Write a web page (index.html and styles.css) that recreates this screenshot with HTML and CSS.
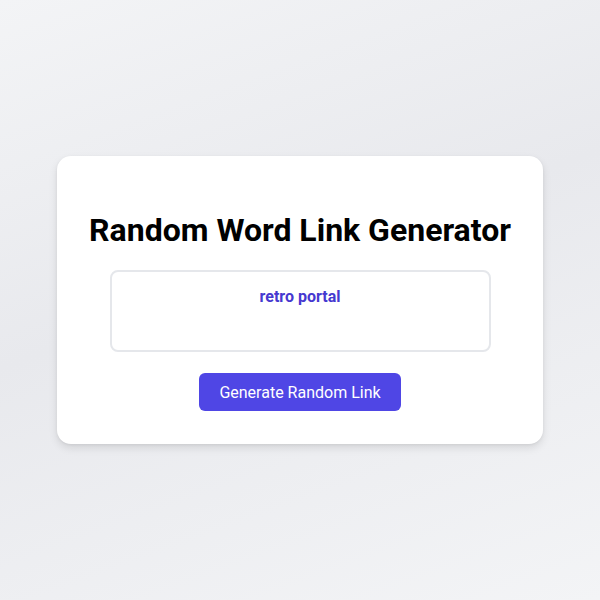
FILE: index.html
```html
<!DOCTYPE html>
<html lang="en">
<head>
<meta charset="utf-8">
<title>Random Word Link Generator</title>
<link rel="stylesheet" href="styles.css">
</head>
<body>
<main class="card">
  <h1 class="title">Random Word Link Generator</h1>
  <div class="output"><a class="link" href="#">retro portal</a></div>
  <button class="btn" type="button">Generate Random Link</button>
</main>
</body>
</html>
```
FILE: styles.css
```css
html, body {
  margin: 0;
  height: 100%;
}
body {
  font-family: Roboto, "Liberation Sans", sans-serif;
  background: linear-gradient(160deg, #f3f4f6 0%, #e8e9ed 45%, #f3f4f6 100%);
  display: flex;
  align-items: center;
  justify-content: center;
}
.card {
  width: 486px;
  box-sizing: border-box;
  background: #ffffff;
  border-radius: 14px;
  box-shadow: 0 4px 8px rgba(0, 0, 0, 0.1), 0 1px 3px rgba(0, 0, 0, 0.06);
  padding: 32px 53px 33px;
  display: flex;
  flex-direction: column;
  align-items: center;
}
.title {
  margin: 23px 0 21px;
  font-size: 32px;
  line-height: 38px;
  font-weight: 700;
  color: #000;
  white-space: nowrap;
}
.output {
  width: 381px;
  height: 82px;
  box-sizing: border-box;
  border: 2px solid #e5e7eb;
  border-radius: 8px;
  padding: 15px 16px 16px;
  text-align: center;
}
.link {
  color: #4639d0;
  font-weight: 700;
  font-size: 16px;
  line-height: 20px;
  text-decoration: none;
}
.btn {
  margin-top: 21px;
  height: 38px;
  padding: 0 20px;
  border: none;
  border-radius: 6px;
  background: #4f46e5;
  color: #ffffff;
  font-family: Roboto, "Liberation Sans", sans-serif;
  font-size: 16px;
}
```
